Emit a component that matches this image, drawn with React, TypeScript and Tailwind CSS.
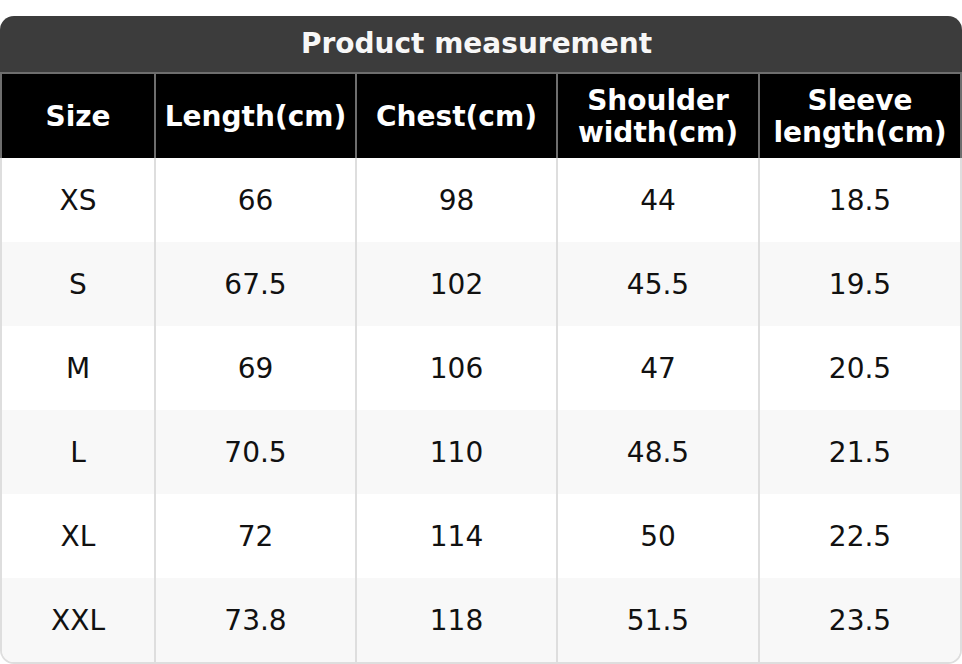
import React from "react";

const headers = ["Size", "Length(cm)", "Chest(cm)", "Shoulder width(cm)", "Sleeve length(cm)"];
const headerLines: string[][] = [["Size"], ["Length(cm)"], ["Chest(cm)"], ["Shoulder", "width(cm)"], ["Sleeve", "length(cm)"]];
const rows = [
  ["XS", "66", "98", "44", "18.5"],
  ["S", "67.5", "102", "45.5", "19.5"],
  ["M", "69", "106", "47", "20.5"],
  ["L", "70.5", "110", "48.5", "21.5"],
  ["XL", "72", "114", "50", "22.5"],
  ["XXL", "73.8", "118", "51.5", "23.5"],
];

export default function App() {
  return (
    <div className="w-[962px] h-[664px] bg-white pt-[16px]" style={{ fontFamily: '"DejaVu Sans", sans-serif' }}>
      <div className="rounded-t-[14px] bg-[#3c3c3c] h-[58px] border-b-2 border-[#6e6e6e] flex items-center justify-center pr-[9px] text-[28px] font-bold text-[#f7f7f7]">
        Product measurement
      </div>
      <div className="grid grid-cols-[152px_201px_201px_202px_1fr] h-[84px] bg-black border-x-2 border-[#6e6e6e]">
        {headerLines.map((lines, i) => (
          <div
            key={headers[i]}
            className={`flex flex-col items-center justify-center pt-[2px] text-[28px] leading-[32px] font-bold text-white ${i > 0 ? "border-l-2 border-[#6e6e6e]" : ""}`}
          >
            {lines.map((l) => (
              <span key={l}>{l}</span>
            ))}
          </div>
        ))}
      </div>
      <div className="border-x-2 border-b-2 border-[#dedede] rounded-b-[14px] overflow-hidden">
        {rows.map((r, ri) => (
          <div
            key={r[0]}
            className={`grid grid-cols-[152px_201px_201px_202px_1fr] h-[84px] ${ri % 2 === 1 ? "bg-[#f8f8f8]" : "bg-white"}`}
          >
            {r.map((c, ci) => (
              <div
                key={ci}
                className={`flex items-center justify-center pt-[2px] text-[28px] text-[#111] ${ci > 0 ? "border-l-2 border-[#dedede]" : ""}`}
              >
                {c}
              </div>
            ))}
          </div>
        ))}
      </div>
    </div>
  );
}
